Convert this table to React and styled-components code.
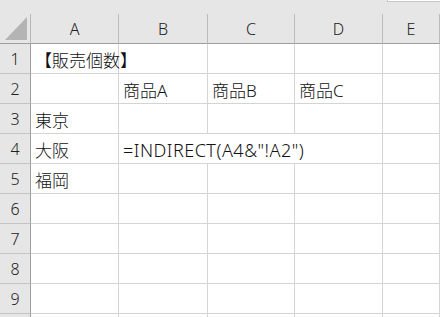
import styled, { createGlobalStyle } from 'styled-components';

const GlobalStyle = createGlobalStyle`
  html, body {
    margin: 0;
    padding: 0;
    background: #ffffff;
    overflow: hidden;
  }
  body {
    font-family: "Noto Sans", "Noto Sans CJK JP", sans-serif;
    font-weight: 300;
    color: #111111;
  }
`;

const COLUMNS = ['A', 'B', 'C', 'D', 'E'];
const VISIBLE_ROWS = 9;

const ROWS = {
  1: { A: '【販売個数】' },
  2: { B: '商品A', C: '商品B', D: '商品C' },
  3: { A: '東京' },
  4: { A: '大阪', B: { text: '=INDIRECT(A4&"!A2")', span: 3, formula: true } },
  5: { A: '福岡' },
};

const Sheet = styled.div`
  width: 440px;
  height: 317px;
  overflow: hidden;
  background: #e6e6e6;
`;

const TopStrip = styled.div`
  height: 14px;
  display: flex;
  justify-content: flex-end;
`;

const NameBoxEdge = styled.div`
  width: 52px;
  height: 1px;
  background: #ffffff;
  border: 1px solid #c6c6c6;
  border-top: none;
  border-right: none;
`;

const Grid = styled.div`
  display: grid;
  grid-template-columns: 31px 88px 89px 87px 88px 1fr;
  grid-auto-rows: 30px;
  background: #ffffff;
`;

const Corner = styled.div`
  background: #e6e6e6;
  border-right: 1px solid #b8b8b8;
  border-bottom: 1px solid #9e9e9e;
  display: flex;
  align-items: flex-end;
  justify-content: flex-end;
  padding: 0 3px 3px 0;
`;

const ColHeader = styled.div`
  background: #e6e6e6;
  border-right: 1px solid #bcbcbc;
  border-bottom: 1px solid #9e9e9e;
  display: flex;
  align-items: center;
  justify-content: center;
  font-size: 16px;
  color: #222222;
  padding-top: 1px;
`;

const RowHeader = styled.div`
  background: #e6e6e6;
  border-right: 1px solid #9e9e9e;
  border-bottom: 1px solid #c4c4c4;
  display: flex;
  align-items: center;
  justify-content: center;
  font-size: 16px;
  color: #222222;
  padding-top: 1px;
`;

const Cell = styled.div`
  grid-column: span ${props => props.$span || 1};
  border-right: 1px solid #d4d4d4;
  border-bottom: 1px solid #d4d4d4;
  display: flex;
  align-items: center;
  padding: 2px 0 0 4px;
  font-size: ${props => (props.$formula ? '18px' : '17px')};
  letter-spacing: ${props => (props.$formula ? '0.5px' : 'normal')};
  white-space: nowrap;
  overflow: visible;
`;

const renderCells = data => {
  const cells = [];
  let skip = 0;
  COLUMNS.forEach(col => {
    if (skip > 0) {
      skip -= 1;
      return;
    }
    const value = data[col];
    if (value && typeof value === 'object') {
      skip = value.span - 1;
      cells.push(
        <Cell key={col} $span={value.span} $formula={value.formula}>
          {value.text}
        </Cell>
      );
    } else {
      cells.push(<Cell key={col}>{value || ''}</Cell>);
    }
  });
  return cells;
};

const renderRow = row => [
  <RowHeader key={`h${row}`}>{row}</RowHeader>,
  ...renderCells(ROWS[row] || {}).map(cell => ({ ...cell, key: `${row}${cell.key}` })),
];

const App = () => {
  const rows = Array.from({ length: VISIBLE_ROWS }, (_, i) => i + 1);
  return (
    <Sheet>
      <GlobalStyle />
      <TopStrip>
        <NameBoxEdge />
      </TopStrip>
      <Grid>
        <Corner>
          <svg width="22" height="23" viewBox="0 0 22 23">
            <polygon points="0,23 22,23 22,0" fill="#b4b4b4" />
          </svg>
        </Corner>
        {COLUMNS.map(col => (
          <ColHeader key={col}>{col}</ColHeader>
        ))}
        {rows.map(renderRow)}
        {/* next row, only its top edge is in view */}
        <RowHeader />
        {renderCells({}).map(cell => ({ ...cell, key: `tail${cell.key}` }))}
      </Grid>
    </Sheet>
  );
};

export default App;
